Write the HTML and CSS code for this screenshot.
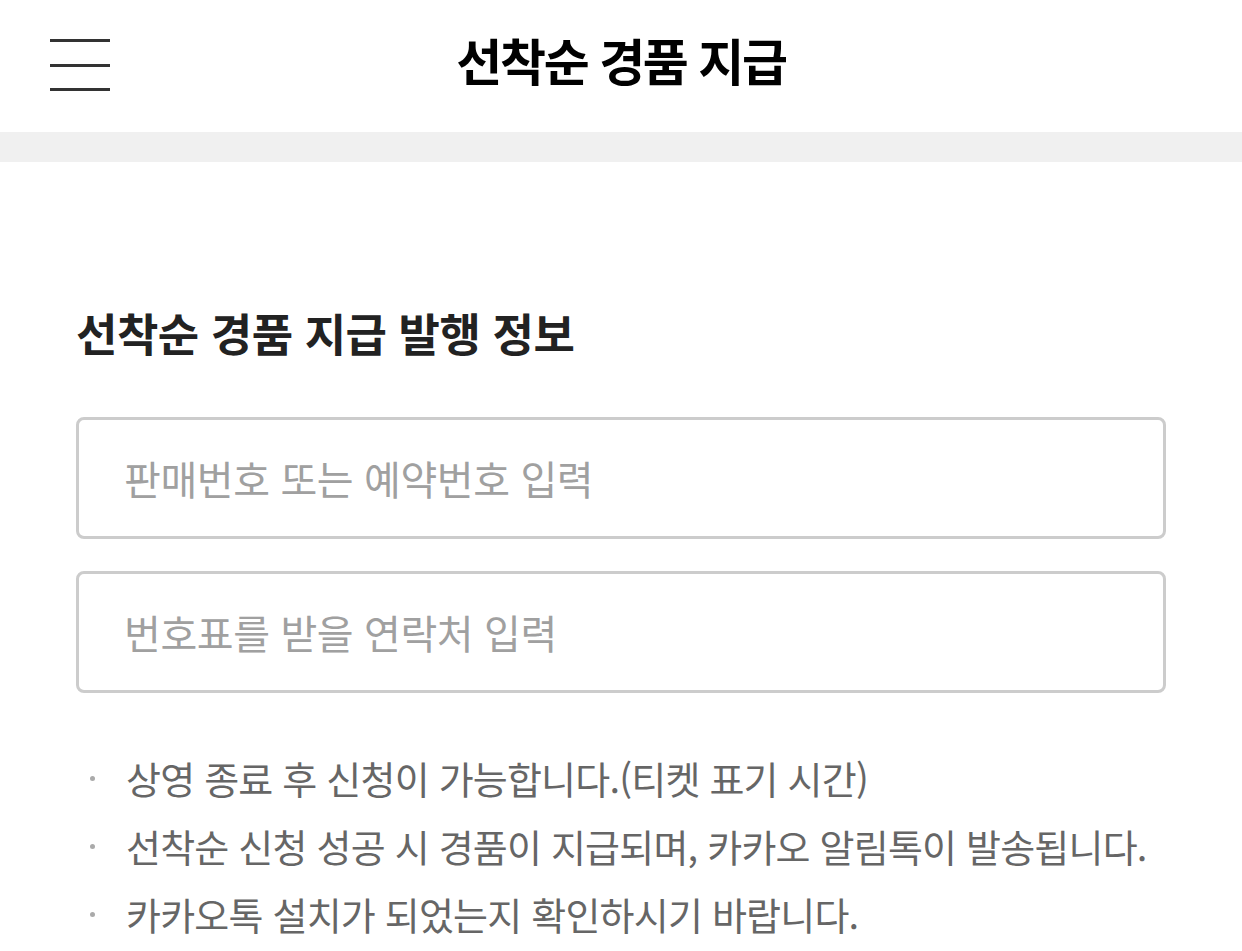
FILE: index.html
```html
<!DOCTYPE html>
<html lang="ko">
<head>
    <meta charset="UTF-8">
    <meta name="viewport" content="width=device-width, initial-scale=1.0">
    <title>선착순 경품 지급</title>
    <link rel="stylesheet" href="styles.css">
</head>
<body>
    <header class="top-bar">
        <button class="menu-btn" type="button" aria-label="메뉴">
            <span></span>
            <span></span>
            <span></span>
        </button>
        <h1>선착순 경품 지급</h1>
        <div class="spacer"></div>
    </header>
    <div class="divider"></div>
    <main class="content">
        <h2>선착순 경품 지급 발행 정보</h2>
        <form class="issue-form">
            <input type="text" placeholder="판매번호 또는 예약번호 입력">
            <input type="tel" placeholder="번호표를 받을 연락처 입력">
        </form>
        <ul class="notice">
            <li>상영 종료 후 신청이 가능합니다.(티켓 표기 시간)</li>
            <li>선착순 신청 성공 시 경품이 지급되며, 카카오 알림톡이 발송됩니다.</li>
            <li>카카오톡 설치가 되었는지 확인하시기 바랍니다.</li>
        </ul>
    </main>
</body>
</html>
```

FILE: styles.css
```css
body {
    font-family: "Noto Sans CJK KR", "Noto Sans", sans-serif;
    background-color: #fff;
    color: #222;
    margin: 0;
    padding: 0;
}
.top-bar {
    height: 132px;
    display: grid;
    grid-template-columns: 160px 1fr 160px;
    align-items: center;
}
.menu-btn {
    width: 60px;
    height: 52px;
    margin: 0 0 2px 50px;
    padding: 0;
    border: none;
    background: none;
    display: flex;
    flex-direction: column;
    justify-content: space-between;
}
.menu-btn span {
    display: block;
    height: 3px;
    background-color: #333;
}
.top-bar h1 {
    margin: 0 0 14px;
    text-align: center;
    font-size: 50px;
    font-weight: bold;
    letter-spacing: -2.3px;
    color: #000;
}
.divider {
    height: 30px;
    background-color: #f0f0f0;
}
.content {
    padding: 140px 76px 0;
}
.content h2 {
    margin: 0 0 53px;
    font-size: 45px;
    font-weight: bold;
    letter-spacing: -0.5px;
    line-height: 62px;
    color: #222;
}
.issue-form {
    display: flex;
    flex-direction: column;
    gap: 32px;
}
.issue-form input {
    height: 122px;
    box-sizing: border-box;
    border: 3px solid #ccc;
    border-radius: 8px;
    padding: 0 45px;
    font-family: inherit;
    font-size: 40px;
    letter-spacing: -0.4px;
    color: #333;
}
.issue-form input::placeholder {
    color: #a0a0a0;
}
.notice {
    list-style: none;
    margin: 51px 0 0;
    padding: 0;
}
.notice li {
    position: relative;
    padding-left: 50px;
    font-size: 38px;
    letter-spacing: -0.8px;
    line-height: 68px;
    color: #666;
}
.notice li::before {
    content: "";
    position: absolute;
    left: 14px;
    top: 32px;
    width: 5px;
    height: 5px;
    border-radius: 50%;
    background-color: #aaa;
}
```
